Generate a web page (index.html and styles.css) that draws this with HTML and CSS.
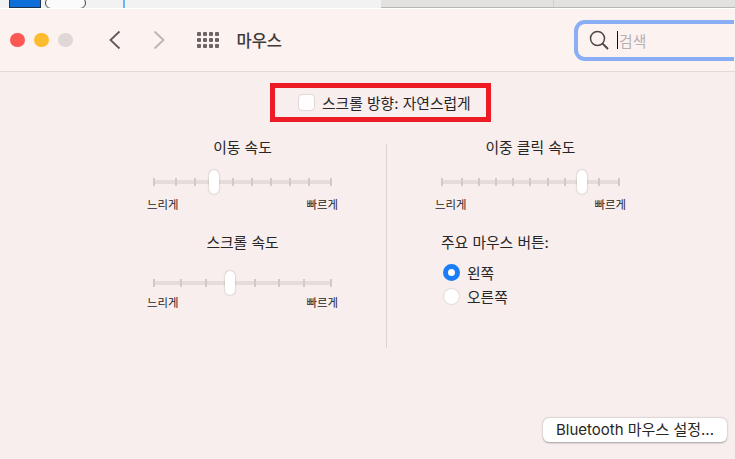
FILE: index.html
```html
<!DOCTYPE html>
<html lang="ko">
<head>
    <meta charset="utf-8" />
    <title>마우스</title>
    <link rel="stylesheet" href="styles.css">
</head>
<body>
    <div class="desk">
        <span class="deskBlue"></span>
        <span class="deskTab"></span>
        <span class="deskLine"></span>
        <span class="deskRest"></span>
    </div>

    <div class="toolbar">
        <div class="lights">
            <span class="light red"></span>
            <span class="light yellow"></span>
            <span class="light grey"></span>
        </div>
        <svg class="nav" width="14" height="20" viewBox="0 0 14 20"><path d="M11.5 1.5 2.5 10l9 8.5" fill="none" stroke="#5f5a5a" stroke-width="1.8"/></svg>
        <svg class="nav next" width="14" height="20" viewBox="0 0 14 20"><path d="M2.5 1.5l9 8.5-9 8.5" fill="none" stroke="#b9b4b4" stroke-width="1.8"/></svg>
        <div class="grid">
            <i></i><i></i><i></i><i></i><i></i><i></i><i></i><i></i><i></i><i></i><i></i><i></i>
        </div>
        <div class="title">마우스</div>
        <div class="search">
            <svg width="22" height="22" viewBox="0 0 22 22"><circle cx="9.5" cy="9.5" r="7" fill="none" stroke="#4a4747" stroke-width="1.5"/><path d="M14.6 14.6 20 20" fill="none" stroke="#4a4747" stroke-width="2"/></svg>
            <span class="caret"></span>
            <span class="placeholder">검색</span>
        </div>
    </div>

    <div class="content">
        <div class="highlight">
            <span class="check"></span>
            <span>스크롤 방향: 자연스럽게</span>
        </div>

        <div class="columns">
            <div class="col">
                <div class="label">이동 속도</div>
                <div class="slider">
                    <div class="ticks"><i></i><i></i><i></i><i></i><i></i><i></i><i></i><i></i><i></i><i></i></div>
                    <span class="thumb" style="left: 31.5%"></span>
                </div>
                <div class="ends"><span>느리게</span><span>빠르게</span></div>

                <div class="label second">스크롤 속도</div>
                <div class="slider">
                    <div class="ticks"><i></i><i></i><i></i><i></i><i></i><i></i><i></i><i></i></div>
                    <span class="thumb" style="left: 40.3%"></span>
                </div>
                <div class="ends tight"><span>느리게</span><span>빠르게</span></div>
            </div>

            <div class="divider"></div>

            <div class="col">
                <div class="label">이중 클릭 속도</div>
                <div class="slider">
                    <div class="ticks"><i></i><i></i><i></i><i></i><i></i><i></i><i></i><i></i><i></i><i></i><i></i></div>
                    <span class="thumb" style="left: 76%"></span>
                </div>
                <div class="ends"><span>느리게</span><span>빠르게</span></div>

                <div class="label second left">주요 마우스 버튼:</div>
                <div class="radios">
                    <div class="radioRow"><span class="radio on"></span>왼쪽</div>
                    <div class="radioRow"><span class="radio"></span>오른쪽</div>
                </div>
            </div>
        </div>

        <div class="btnBt">Bluetooth 마우스 설정...</div>
    </div>
</body>
</html>
```

FILE: styles.css
```css
* {
    box-sizing: border-box
}

body {
    margin: 0;
    width: 735px;
    height: 459px;
    overflow: hidden;
    background-color: #f7eeed;
    color: #272525;
    font-family: Inter, "Noto Sans CJK KR", sans-serif;
    font-size: 14.8px;
    display: flex;
    flex-direction: column
}

i {
    display: block
}

/* strip of the window behind */
.desk {
    height: 9px;
    flex: none;
    display: flex;
    background-color: #f2f2f2;
    border-bottom: 1px solid #fff;
    overflow: hidden
}

.deskBlue {
    width: 32px;
    height: 8px;
    margin-left: 9px;
    background-color: #0f6fd8;
    border: 1px solid #1d3350;
    border-top: none
}

.deskTab {
    width: 41px;
    height: 12px;
    margin: -3px 0 0 4px;
    background-color: #fbfbfb;
    border: 1px solid #444;
    border-radius: 8px
}

.deskLine {
    width: 2px;
    margin-left: 37px;
    background-color: #6cb5f5
}

.deskRest {
    flex: 1;
    margin-left: 256px;
    background: linear-gradient(#d3d1cf, #d3d1cf) 172px 0 / 1px 100% no-repeat #e3e1df;
    border-bottom: 1px solid #b9b7b5
}

/* toolbar */
.toolbar {
    height: 63px;
    flex: none;
    display: flex;
    align-items: center;
    padding-left: 10px;
    background-color: #fcf2f0;
    border-bottom: 1px solid #e3d9d7
}

.toolbar > * {
    flex: none
}

.lights {
    display: flex;
    gap: 9.5px
}

.light {
    width: 14.5px;
    height: 14.5px;
    border-radius: 50%
}

.red {
    background-color: #fc5753
}

.yellow {
    background-color: #fdbc2e
}

.grey {
    background-color: #dfd8d7
}

.nav {
    margin-left: 35px
}

.nav.next {
    margin-left: 30px
}

.grid {
    width: 22px;
    margin-left: 31px;
    display: grid;
    grid-template-columns: repeat(4, 4px);
    grid-auto-rows: 4px;
    gap: 2px
}

.grid i {
    background-color: #6b6565;
    border-radius: 1px
}

.title {
    margin-left: 18px;
    font-size: 16.5px;
    font-weight: 500;
    color: #3d3a3a
}

.search {
    width: 160px;
    height: 41px;
    margin-left: 292px;
    display: flex;
    align-items: center;
    padding-left: 10px;
    border: 4px solid #8aaef5;
    border-right: none;
    border-radius: 11px 0 0 11px;
    background-color: #fcf2f0
}

.caret {
    width: 1px;
    height: 18px;
    margin-left: 7px;
    background-color: #111
}

.placeholder {
    margin-left: 1px;
    color: #b7b1b1
}

/* pane */
.content {
    flex: 1;
    display: flex;
    flex-direction: column
}

.highlight {
    width: 221px;
    height: 39px;
    margin: 11px 0 0 270px;
    padding-left: 23px;
    display: flex;
    align-items: center;
    gap: 7px;
    border: 5px solid #ed1c24
}

.check {
    width: 17px;
    height: 17px;
    background-color: #fffdfd;
    border: 1px solid #dfd9d8;
    border-radius: 4px
}

.columns {
    display: flex;
    margin: 16px 0 0 147px
}

.col {
    width: 191px
}

.divider {
    width: 1px;
    height: 204px;
    margin: 6px 48px 0 48px;
    background-color: #dcd4d3
}

.label {
    height: 20px;
    line-height: 20px;
    text-align: center
}

.label.second {
    margin-top: 20px
}

.label.left {
    margin-left: 6px;
    text-align: left
}

.slider {
    width: 179px;
    height: 24px;
    margin: 12px 0 0 6px;
    position: relative;
    display: flex;
    align-items: center
}

.second + .slider {
    margin-top: 18px
}

.ticks {
    width: 100%;
    height: 8px;
    display: flex;
    justify-content: space-between;
    align-items: center;
    background: linear-gradient(#e5dddc, #e5dddc) center / 100% 4px no-repeat
}

.ticks i {
    width: 2px;
    height: 8px;
    background-color: #d2cac9
}

.ticks i:first-child {
    margin-right: 3px
}

.ticks i:last-child {
    margin-left: 3px
}

.thumb {
    position: absolute;
    top: 0;
    width: 10px;
    height: 24px;
    background-color: #fff;
    border-radius: 5px;
    box-shadow: 0 0 2px rgba(0, 0, 0, 0.3)
}

.ends {
    margin-top: 3px;
    display: flex;
    justify-content: space-between;
    font-size: 11.4px;
    line-height: 16px
}

.ends.tight {
    margin-top: 0
}

.radios {
    margin: 11px 0 0 8px;
    display: flex;
    flex-direction: column;
    gap: 7px
}

.radioRow {
    height: 17px;
    display: flex;
    align-items: center;
    gap: 7px
}

.radio {
    width: 17px;
    height: 17px;
    flex: none;
    background-color: #fff;
    border: 1px solid #dfd9d8;
    border-radius: 50%
}

.radio.on {
    border: 5.5px solid #1a7df6
}

.btnBt {
    width: 184px;
    height: 24px;
    margin: auto 8px 17px auto;
    line-height: 24px;
    font-size: 15px;
    text-align: center;
    background-color: #fff;
    border-radius: 6px;
    box-shadow: 0 0.5px 2px rgba(0, 0, 0, 0.35)
}
```
